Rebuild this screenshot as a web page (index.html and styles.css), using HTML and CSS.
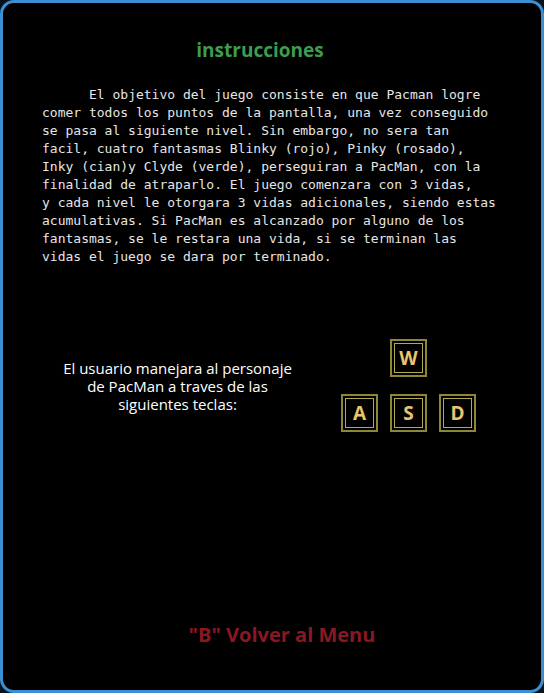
FILE: index.html
```html
<!DOCTYPE html>
<html lang="es">
<head>
<meta charset="utf-8">
<title>instrucciones</title>
<link rel="stylesheet" href="styles.css">
</head>
<body>
<div class="frame">
  <h1 class="title">instrucciones</h1>
  <p class="story">El objetivo del juego consiste en que Pacman logre
comer todos los puntos de la pantalla, una vez conseguido
se pasa al siguiente nivel. Sin embargo, no sera tan
facil, cuatro fantasmas Blinky (rojo), Pinky (rosado),
Inky (cian)y Clyde (verde), perseguiran a PacMan, con la
finalidad de atraparlo. El juego comenzara con 3 vidas,
y cada nivel le otorgara 3 vidas adicionales, siendo estas
acumulativas. Si PacMan es alcanzado por alguno de los
fantasmas, se le restara una vida, si se terminan las
vidas el juego se dara por terminado.</p>
  <div class="controls">
    <p class="controls-text">El usuario manejara al personaje de PacMan a traves de las siguientes teclas:</p>
    <div class="keys">
      <div class="key key-w">W</div>
      <div class="key key-a">A</div>
      <div class="key key-s">S</div>
      <div class="key key-d">D</div>
    </div>
  </div>
  <div class="back">"B" Volver al Menu</div>
</div>
</body>
</html>
```
FILE: styles.css
```css
html, body {
  margin: 0;
  padding: 0;
  background: #07121c;
}
.frame {
  box-sizing: border-box;
  width: 544px;
  height: 693px;
  border: 3px solid #3b8fd2;
  border-radius: 14px;
  background: #000;
  display: flex;
  flex-direction: column;
  align-items: center;
}
.title {
  margin: 35px 24px 0 0;
  font-family: "Open Sans", sans-serif;
  font-weight: 700;
  font-size: 19px;
  line-height: 24px;
  color: #3f9c4f;
}
.story {
  margin: 24px 0 0 0;
  padding-left: 39px;
  align-self: flex-start;
  font-family: "DejaVu Sans Mono", monospace;
  font-size: 13px;
  line-height: 18px;
  color: #e6e6e6;
  text-indent: 47px;
  white-space: pre-line;
}
.controls {
  margin-top: 73px;
  width: 100%;
  display: flex;
  align-items: center;
}
.controls-text {
  margin: 0 0 0 56px;
  width: 237px;
  text-align: center;
  font-family: "Open Sans", sans-serif;
  font-size: 15px;
  line-height: 18px;
  color: #fff;
}
.keys {
  margin-left: 45px;
  display: grid;
  grid-template-columns: repeat(3, 37px);
  grid-template-rows: 38px 38px;
  column-gap: 12px;
  row-gap: 17px;
}
.key {
  box-sizing: border-box;
  border: 2px solid #8e8836;
  outline: 1px solid #b3aa50;
  outline-offset: -5px;
  display: flex;
  align-items: center;
  justify-content: center;
  font-family: "Open Sans", sans-serif;
  font-weight: 700;
  font-size: 19px;
  color: #eac46c;
}
.key-w { grid-column: 2; grid-row: 1; }
.key-a { grid-column: 1; grid-row: 2; }
.key-s { grid-column: 2; grid-row: 2; }
.key-d { grid-column: 3; grid-row: 2; }
.back {
  margin: auto 0 42px 20px;
  font-family: "Open Sans", sans-serif;
  font-weight: 700;
  font-size: 20px;
  line-height: 26px;
  color: #8a1822;
}
```
